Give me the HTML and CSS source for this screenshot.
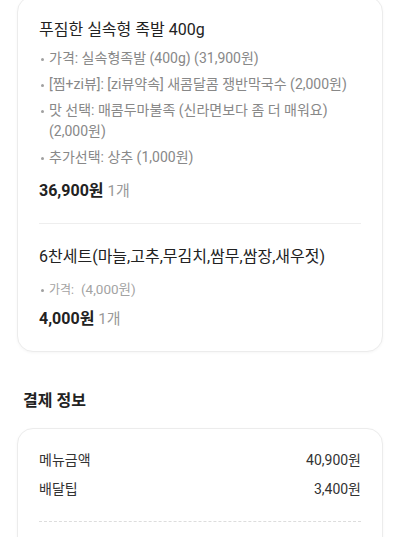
FILE: index.html
```html
<!DOCTYPE html>
<html lang="ko">
<head>
<meta charset="utf-8">
<link rel="stylesheet" href="styles.css">
</head>
<body>
<div class="page">
  <div class="card order-card">
    <div class="item">
      <div class="item-name">푸짐한 실속형 족발 400g</div>
      <ul class="options">
        <li>가격: 실속형족발 (400g) (31,900원)</li>
        <li>[찜+zi뷰]: [zi뷰약속] 새콤달콤 쟁반막국수 (2,000원)</li>
        <li>맛 선택: 매콤두마불족 (신라면보다 좀 더 매워요) (2,000원)</li>
        <li>추가선택: 상추 (1,000원)</li>
      </ul>
      <div class="item-price"><strong>36,900원</strong> <span class="qty">1개</span></div>
    </div>
    <div class="divider"></div>
    <div class="item">
      <div class="item-name">6찬세트(마늘,고추,무김치,쌈무,쌈장,새우젓)</div>
      <ul class="options options-light">
        <li><span class="opt-label">가격:</span>&nbsp; <span class="opt-value">(4,000원)</span></li>
      </ul>
      <div class="item-price"><strong>4,000원</strong> <span class="qty">1개</span></div>
    </div>
  </div>

  <h2 class="section-title">결제 정보</h2>

  <div class="card pay-card">
    <div class="pay-row"><span>메뉴금액</span><span>40,900원</span></div>
    <div class="pay-row"><span>배달팁</span><span>3,400원</span></div>
    <div class="dashed"></div>
  </div>
</div>
</body>
</html>
```

FILE: styles.css
```css
* { box-sizing: border-box; }
html, body { margin: 0; padding: 0; background: #ffffff; }
body {
  font-family: Roboto, "Noto Sans CJK KR", "Noto Sans", sans-serif;
  color: #222222;
  -webkit-font-smoothing: antialiased;
}
.page {
  margin-top: -4px;
  padding: 0 17px 40px;
}
.card {
  border: 1px solid #ececec;
  border-radius: 16px;
  background: #ffffff;
  box-shadow: 0 1px 3px rgba(0, 0, 0, 0.04);
}
.order-card {
  padding: 22px 21px 21px;
}
.item-name {
  font-size: 16px;
  line-height: 22px;
  color: #222222;
}
.options {
  list-style: none;
  margin: 7px 0 0;
  padding: 0;
}
.options li {
  position: relative;
  padding-left: 10px;
  font-size: 14px;
  line-height: 21px;
  color: #888888;
}
.options li + li { margin-top: 5px; }
.options li::before {
  content: "";
  position: absolute;
  left: 2px;
  top: 10px;
  width: 3px;
  height: 3px;
  border-radius: 50%;
  background: #a0a0a0;
}
.options-light { margin-top: 11px; }
.options-light li { color: #a3a3a3; line-height: 20px; }
.opt-label { font-size: 12px; }
.opt-value { font-size: 13.5px; }
.item-price {
  margin-top: 12px;
  font-size: 16px;
  line-height: 22px;
  color: #222222;
}
.options-light + .item-price { margin-top: 8px; }
.item-price strong { font-weight: 700; }
.qty { color: #999999; font-size: 15px; }
.divider {
  height: 1px;
  background: #eeeeee;
  margin: 21px 0 22px;
}
.section-title {
  margin: 37px 0 0 6px;
  font-size: 16px;
  line-height: 24px;
  font-weight: 700;
  color: #222222;
}
.pay-card {
  margin-top: 15px;
  padding: 21px 21px 20px;
}
.pay-row {
  display: flex;
  justify-content: space-between;
  font-size: 14px;
  line-height: 20px;
  color: #333333;
}
.pay-row + .pay-row { margin-top: 9px; }
.dashed {
  margin-top: 22px;
  border-top: 1px dashed #dddddd;
  height: 40px;
}
```
